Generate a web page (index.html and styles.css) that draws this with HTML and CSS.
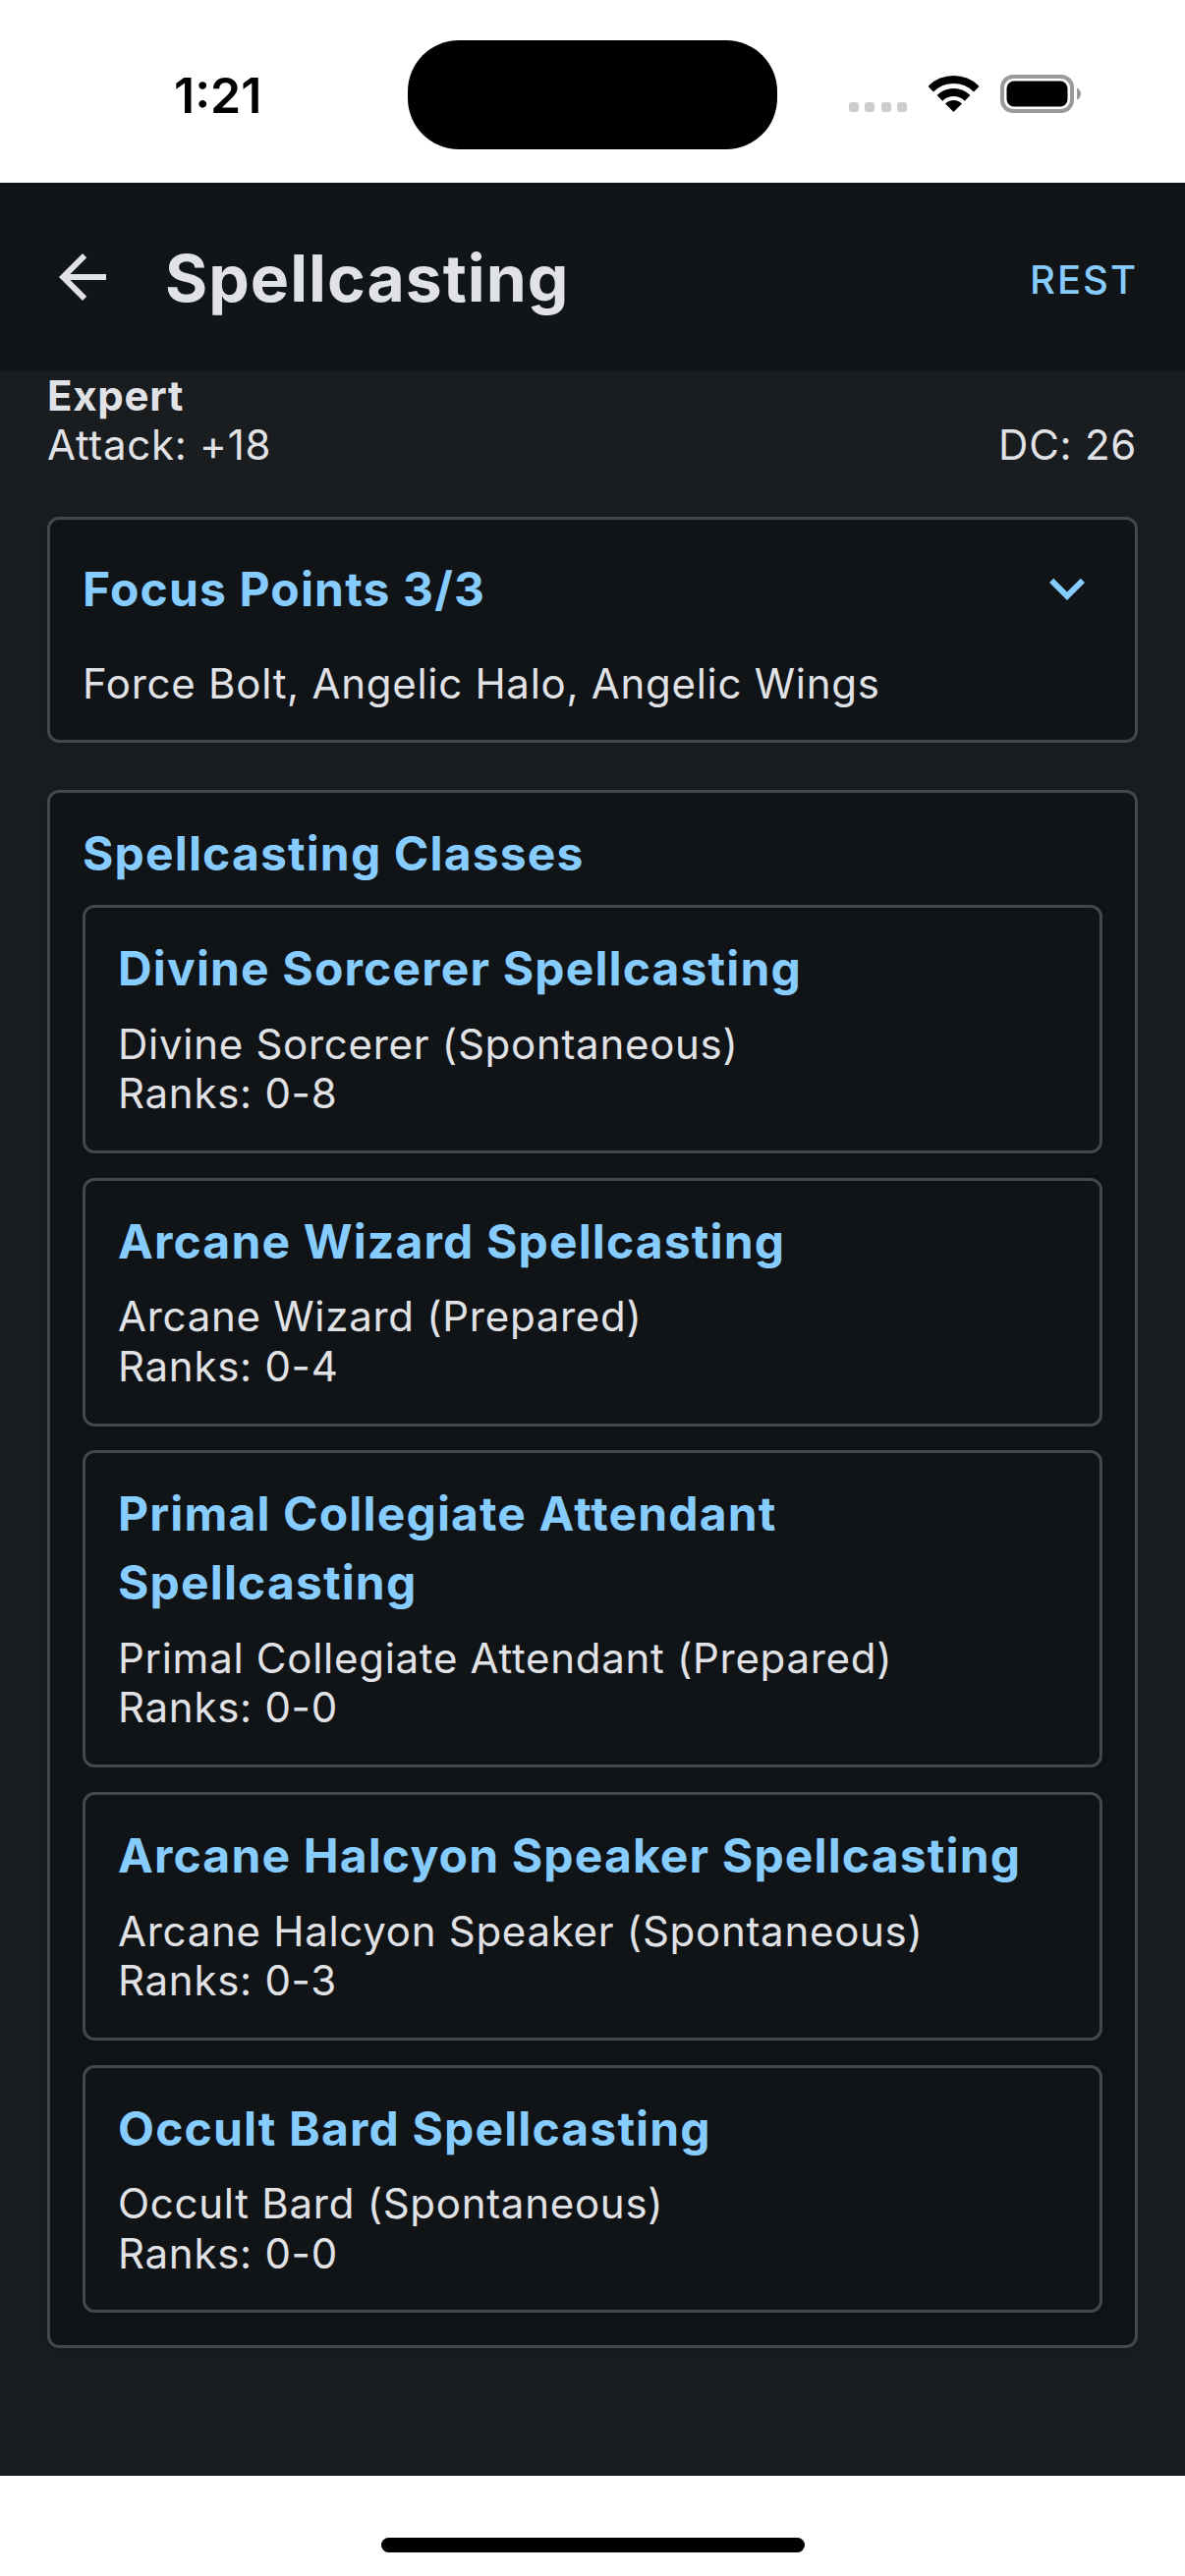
FILE: index.html
```html
<!DOCTYPE html>
<html lang="en">
<head>
<meta charset="utf-8">
<title>Spellcasting</title>
<link rel="stylesheet" href="styles.css">
</head>
<body>
<div class="screen">
  <div class="status">
    <span class="time">1:21</span>
    <div class="island"></div>
    <div class="dots"><i></i><i></i><i></i><i></i></div>
    <svg class="wifi" width="51" height="37" viewBox="0 0 51 37"><path d="M2.2 13.7A33 33 0 0 1 48.8 13.7" fill="none" stroke="#000" stroke-width="8"/><path d="M11.4 22.9A20 20 0 0 1 39.6 22.9" fill="none" stroke="#000" stroke-width="8"/><path d="M25.5 37L17 28.5A12 12 0 0 1 34 28.5Z" fill="#000"/></svg>
    <svg class="battery" width="82" height="39" viewBox="0 0 82 39"><rect x="2" y="2" width="71" height="35" rx="11" fill="#fff" stroke="#9a9a9a" stroke-width="4"/><rect x="6.500" y="6.500" width="62" height="26" rx="7.500" fill="#000"/><path d="M78 13.500C80.500 14.500 82 16.500 82 19.500C82 22.500 80.500 24.500 78 25.500Z" fill="#9a9a9a"/></svg>
  </div>
  <header class="appbar">
    <svg class="back" width="72" height="72" viewBox="0 0 24 24"><path d="M20 11H7.830l5.590-5.590L12 4l-8 8 8 8 1.410-1.410L7.830 13H20v-2z" fill="#e1e2e6"/></svg>
    <h1 class="title">Spellcasting</h1>
    <span class="rest">REST</span>
  </header>
  <main class="content">
    <div class="summary">
      <div class="prof">Expert</div>
      <div class="stats"><span>Attack: +18</span><span>DC: 26</span></div>
    </div>
    <section class="card focus">
      <div class="focus-head">
        <h2 class="heading">Focus Points 3/3</h2>
        <svg class="chevron" width="72" height="72" viewBox="0 0 24 24"><path d="M16.590 8.590L12 13.170 7.410 8.590 6 10l6 6 6-6z" fill="#87ccff"/></svg>
      </div>
      <p class="body focus-body">Force Bolt, Angelic Halo, Angelic Wings</p>
    </section>
    <section class="card classes">
      <h2 class="heading classes-head">Spellcasting Classes</h2>
      <div class="class-list">
        <article class="card class-card">
          <h3 class="heading">Divine Sorcerer Spellcasting</h3>
          <p class="body class-body">Divine Sorcerer (Spontaneous)<br>Ranks: 0-8</p>
        </article>
        <article class="card class-card">
          <h3 class="heading">Arcane Wizard Spellcasting</h3>
          <p class="body class-body">Arcane Wizard (Prepared)<br>Ranks: 0-4</p>
        </article>
        <article class="card class-card">
          <h3 class="heading">Primal Collegiate Attendant Spellcasting</h3>
          <p class="body class-body">Primal Collegiate Attendant (Prepared)<br>Ranks: 0-0</p>
        </article>
        <article class="card class-card">
          <h3 class="heading">Arcane Halcyon Speaker Spellcasting</h3>
          <p class="body class-body">Arcane Halcyon Speaker (Spontaneous)<br>Ranks: 0-3</p>
        </article>
        <article class="card class-card">
          <h3 class="heading">Occult Bard Spellcasting</h3>
          <p class="body class-body">Occult Bard (Spontaneous)<br>Ranks: 0-0</p>
        </article>
      </div>
    </section>
  </main>
  <footer class="home"><div class="home-bar"></div></footer>
</div>
</body>
</html>
```
FILE: styles.css
```css
* { box-sizing: border-box; }
html, body { margin: 0; padding: 0; background: #fff; }
body { font-family: Inter, "Noto Sans", sans-serif; color: #e1e2e6; }
.screen { width: 1206px; height: 2622px; display: flex; flex-direction: column; overflow: hidden; }

.status { height: 186px; flex: none; background: #fff; display: flex; align-items: flex-start; padding-left: 177px; }
.time { width: 238px; margin-top: 67px; font-size: 50px; line-height: 60px; font-weight: 600; color: #000; }
.island { width: 376px; height: 111px; margin-top: 41px; background: #000; border-radius: 52px; }
.dots { display: flex; gap: 6.4px; margin: 104px 0 0 73px; }
.dots i { display: block; width: 10px; height: 10px; border-radius: 3px; background: #cdcdcd; }
.wifi { margin: 77px 0 0 22px; }
.battery { margin: 76px 0 0 22px; }

.appbar { height: 192px; flex: none; background: #111518; display: flex; align-items: center; padding: 0 48px; }
.back { flex: none; }
.title { margin: 1px 0 0 48px; font-size: 66px; line-height: 72px; font-weight: 700; letter-spacing: 1px; color: #e1e2e6; }
.rest { margin: 5px 0 0 auto; font-size: 40px; line-height: 48px; font-weight: 500; letter-spacing: 2px; color: #87ccff; }

.content { flex: 1; background: #191d20; padding: 0 48px; }
.summary { font-size: 42px; line-height: 50.4px; letter-spacing: 0.72px; }
.prof { font-weight: 700; }
.stats { display: flex; justify-content: space-between; padding-right: 1px; }

.card { background: #101417; border: 3px solid #44474e; border-radius: 12px; box-shadow: 0 2px 6px rgba(0, 0, 0, 0.12); }
.heading { margin: 0; font-size: 48px; line-height: 70px; font-weight: 700; color: #87ccff; letter-spacing: 1.15px; }
.body { margin: 0; font-size: 42px; line-height: 50.4px; font-weight: 400; letter-spacing: 0.72px; color: #e1e2e6; }

.focus { margin-top: 47px; height: 230px; padding: 36px 33px 0; }
.focus-head { display: flex; justify-content: space-between; align-items: center; height: 70px; }
.chevron { flex: none; margin-top: -1px; }
.focus-body { margin-top: 36px; }

.classes { margin-top: 48.4px; padding: 27px 33px 33px; }
.classes-head { margin-bottom: 17px; }
.class-list { display: flex; flex-direction: column; gap: 24.8px; }
.class-card { padding: 27px 33px 32.4px; }
.class-body { margin-top: 16.6px; }

.home { height: 102px; flex: none; background: #fff; padding: 63px 0 0 388px; }
.home-bar { width: 431px; height: 15px; border-radius: 8px; background: #000; }
```
